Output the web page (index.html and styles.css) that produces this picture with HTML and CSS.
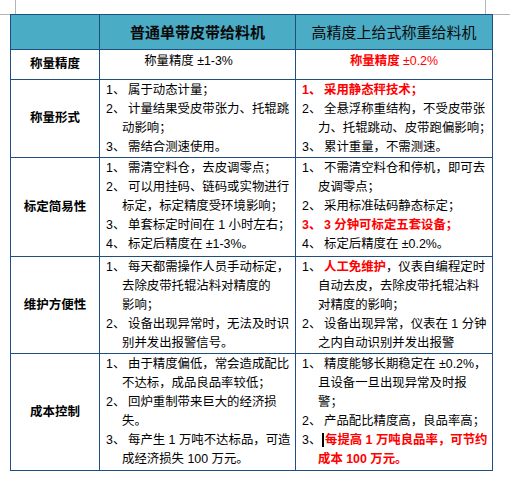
FILE: index.html
```html
<!DOCTYPE html>
<html>
<head>
<meta charset="utf-8">
<link rel="stylesheet" href="styles.css">
</head>
<body>
<div class="page">
  <span class="mark mark-l"></span>
  <span class="mark mark-r"></span>
  <table class="cmp">
    <colgroup>
      <col class="c1"><col class="c2"><col class="c3">
    </colgroup>
    <tr class="r-head">
      <th></th>
      <th class="h-bold">普通单带皮带给料机</th>
      <th class="h-normal">高精度上给式称重给料机</th>
    </tr>
    <tr class="r1">
      <td class="label">称量精度</td>
      <td class="center shift">称量精度 ±1-3%</td>
      <td class="center red"><b>称量精度</b> ±0.2%</td>
    </tr>
    <tr class="r2">
      <td class="label">称量形式</td>
      <td>
        <p><span class="n">1、</span>属于动态计量；</p>
        <p><span class="n">2、</span>计量结果受皮带张力、托辊跳<br>动影响；</p>
        <p><span class="n">3、</span>需结合测速使用。</p>
      </td>
      <td>
        <p class="red b"><span class="n">1、</span>采用静态秤技术；</p>
        <p><span class="n">2、</span>全悬浮称重结构，不受皮带张<br>力、托辊跳动、皮带跑偏影响；</p>
        <p><span class="n">3、</span>累计重量，不需测速。</p>
      </td>
    </tr>
    <tr class="r3">
      <td class="label">标定简易性</td>
      <td>
        <p><span class="n">1、</span>需清空料仓，去皮调零点；</p>
        <p><span class="n">2、</span>可以用挂码、链码或实物进行<br>标定，标定精度受环境影响；</p>
        <p><span class="n">3、</span>单套标定时间在 1 小时左右；</p>
        <p><span class="n">4、</span>标定后精度在 ±1-3%。</p>
      </td>
      <td>
        <p><span class="n">1、</span>不需清空料仓和停机，即可去<br>皮调零点；</p>
        <p><span class="n">2、</span>采用标准砝码静态标定；</p>
        <p class="red b"><span class="n">3、</span>3 分钟可标定五套设备；</p>
        <p><span class="n">4、</span>标定后精度在 ±0.2%。</p>
      </td>
    </tr>
    <tr class="r4">
      <td class="label">维护方便性</td>
      <td>
        <p><span class="n">1、</span>每天都需操作人员手动标定，<br>去除皮带托辊沾料对精度的<br>影响；</p>
        <p><span class="n">2、</span>设备出现异常时，无法及时识<br>别并发出报警信号。</p>
      </td>
      <td>
        <p><span class="n">1、</span><span class="red b">人工免维护</span>，仪表自编程定时<br>自动去皮，去除皮带托辊沾料<br>对精度的影响；</p>
        <p><span class="n">2、</span>设备出现异常，仪表在 1 分钟<br>之内自动识别并发出报警</p>
      </td>
    </tr>
    <tr class="r5">
      <td class="label">成本控制</td>
      <td>
        <p><span class="n">1、</span>由于精度偏低，常会造成配比<br>不达标，成品良品率较低；</p>
        <p><span class="n">2、</span>回炉重制带来巨大的经济损<br>失。</p>
        <p><span class="n">3、</span>每产生 1 万吨不达标品，可造<br>成经济损失 100 万元。</p>
      </td>
      <td>
        <p><span class="n">1、</span>精度能够长期稳定在 ±0.2%，<br>且设备一旦出现异常及时报<br>警；</p>
        <p><span class="n">2、</span>产品配比精度高，良品率高；</p>
        <p><span class="n n-caret">3、</span><span class="caret"></span><span class="red b">每提高 1 万吨良品率，可节约<br>成本 100 万元。</span></p>
      </td>
    </tr>
  </table>
</div>
</body>
</html>
```

FILE: styles.css
```css
html, body {
  margin: 0;
  padding: 0;
  background: #ffffff;
}

body {
  font-family: "Liberation Sans", "Noto Sans CJK SC", sans-serif;
  color: #000;
}

.page {
  position: relative;
  width: 510px;
  height: 478px;
  padding: 14px 0 0 10px;
  box-sizing: border-box;
}

.mark {
  position: absolute;
  background: #b4b4b4;
}

.mark-l {
  left: 15px;
  top: 0;
  width: 1px;
  height: 14px;
}

.mark-l::after {
  content: "";
  position: absolute;
  left: -15px;
  top: 14px;
  width: 15px;
  height: 1px;
  background: #b4b4b4;
}

.mark-r {
  left: 485px;
  top: 0;
  width: 1px;
  height: 14px;
}

.mark-r::after {
  content: "";
  position: absolute;
  left: 0;
  top: 14px;
  width: 25px;
  height: 1px;
  background: #b4b4b4;
}

.cmp {
  border-collapse: collapse;
  table-layout: fixed;
  width: 483px;
  position: relative;
  z-index: 1;
  background: #fff;
}

.c1 { width: 89px; }
.c2 { width: 196px; }
.c3 { width: 197px; }

.cmp th,
.cmp td {
  border: 1.5px solid #1f4e80;
  padding: 1px 2px 0 6px;
  vertical-align: top;
  font-size: 12.4px;
  line-height: 19px;
  text-align: left;
}

.cmp th {
  background: #4bacc6;
  font-size: 15px;
  text-align: center;
  vertical-align: middle;
  padding: 0;
  color: #0a0a0a;
}

.h-bold { font-weight: bold; }
.h-normal { font-weight: normal; }

.r-head { height: 35px; }
.r1 { height: 30px; }
.r2 { height: 77px; }
.r3 { height: 99px; }
.r4 { height: 97px; }
.r5 { height: 117px; }

.cmp td.label {
  font-weight: bold;
  font-size: 12.5px;
  text-align: center;
  vertical-align: middle;
  padding: 0;
}

.cmp td.center {
  text-align: center;
  padding: 2px 0 0 0;
}

.cmp td.shift {
  padding-right: 18px;
}

.cmp p {
  margin: 0;
  padding-left: 16px;
  text-indent: -16px;
  white-space: nowrap;
}

.n {
  display: inline-block;
  width: 22px;
  text-indent: 0;
}

.n-caret {
  width: 20px;
}

.caret {
  display: inline-block;
  width: 2px;
  height: 14px;
  background: #000;
  vertical-align: -3px;
  margin-right: 1px;
}

.red { color: #ff0000; }
.b { font-weight: bold; }
.red b { font-weight: bold; }
```
